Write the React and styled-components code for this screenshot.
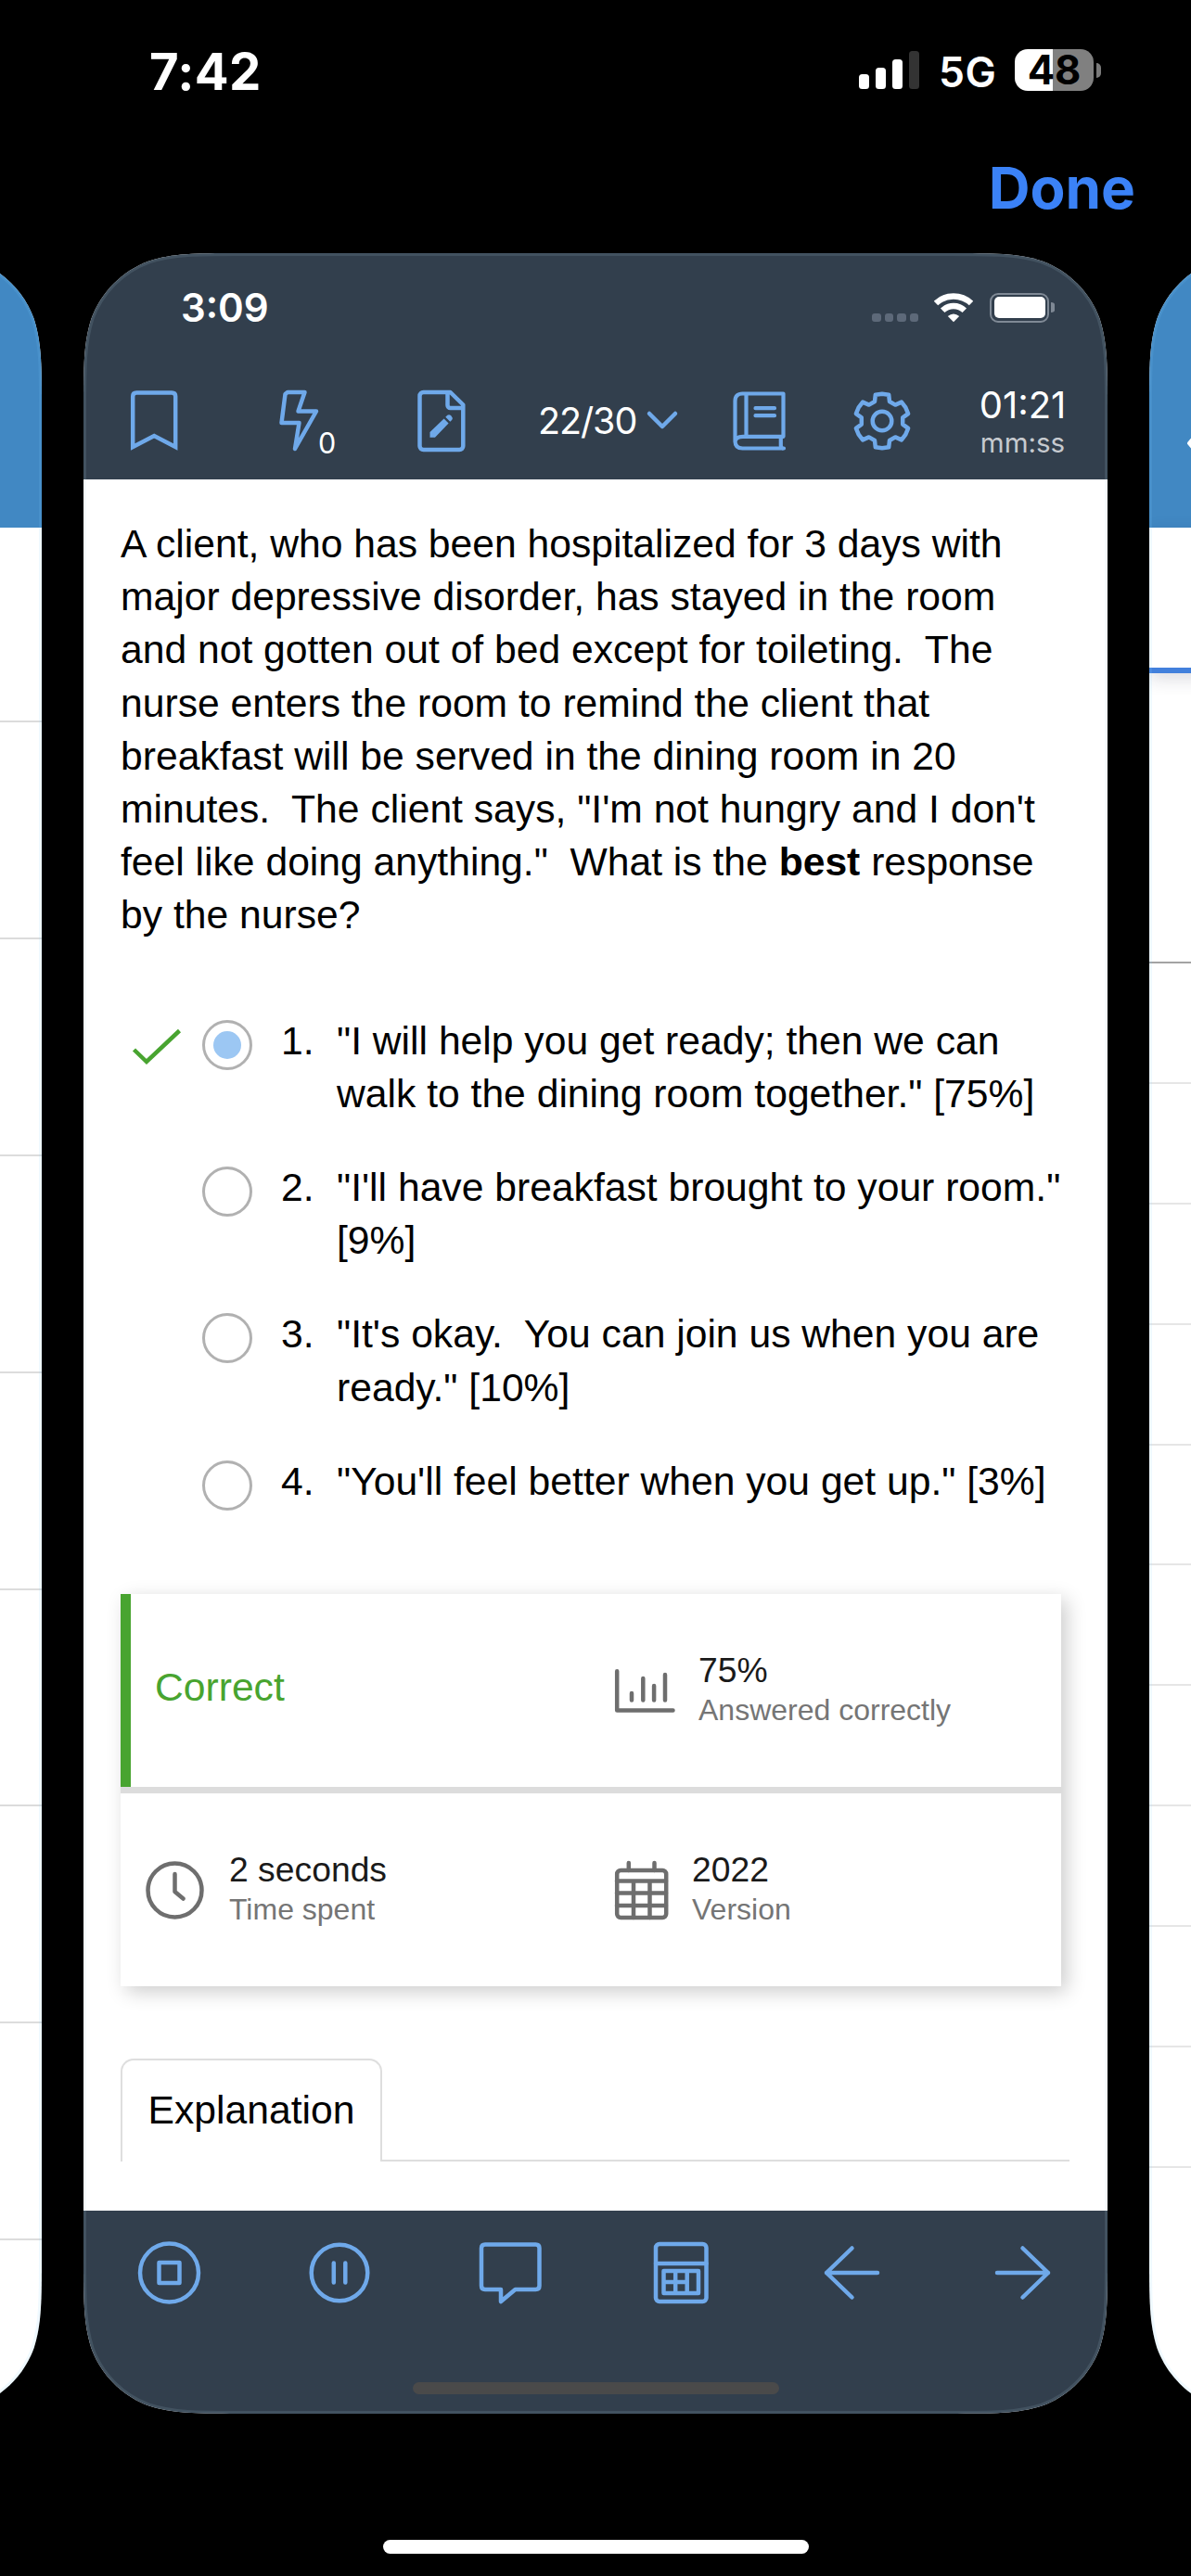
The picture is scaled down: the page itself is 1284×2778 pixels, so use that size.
import React from "react";
import styled, { createGlobalStyle } from "styled-components";

const INK = "#323f4d";
const ACCENT = "#6fa9ea";
const GREY = "#6e6e6e";
const GREEN = "#48a430";
const PANEL_W = 1104;
const PANEL_H = 2330;

/* Rounded rectangle whose corners ease into the sides. */
const smoothRect = (w, h, r) => {
  const n = (v) => Math.round(v * 100) / 100;
  const seg = [
    [1.52866, 0], [1.08849, 0], [0.86841, 0], [0.63149, 0.07491],
    [0.37282, 0.16906], [0.16906, 0.37282], [0.07491, 0.63149],
    [0, 0.86841], [0, 1.08849], [0, 1.52866],
  ].map(([x, y]) => [x * r, y * r]);
  const corner = (pts) => {
    const [a, ...rest] = pts.map(([x, y]) => `${n(x)} ${n(y)}`);
    return `${a} C${rest.slice(0, 3).join(" ")} C${rest.slice(3, 6).join(" ")} C${rest.slice(6, 9).join(" ")}`;
  };
  const tr = corner(seg.map(([x, y]) => [w - x, y]));
  const br = corner([...seg].reverse().map(([x, y]) => [w - x, h - y]));
  const bl = corner(seg.map(([x, y]) => [x, h - y]));
  const tl = corner([...seg].reverse().map(([x, y]) => [x, y]));
  return `M${tr} L${br} L${bl} L${tl} Z`;
};
const PANEL_SHAPE = smoothRect(PANEL_W, PANEL_H, 112);

const Global = createGlobalStyle`
  html, body { margin: 0; background: #000; }
  * { box-sizing: border-box; }
`;

const Screen = styled.main`
  width: 1284px;
  height: 2778px;
  overflow: hidden;
  display: flex;
  flex-direction: column;
  align-items: center;
  background: #000;
  font-family: Inter, "Liberation Sans", sans-serif;
`;

const StatusBar = styled.div`
  width: 100%;
  height: 151px;
  padding: 0 97px 0 161px;
  display: flex;
  align-items: center;
  justify-content: space-between;
`;
const Clock = styled.span`
  margin-top: 2px;
  color: #fff;
  font-size: 54.5px;
  line-height: 60px;
  font-weight: 750;
  letter-spacing: 0.4px;
`;
const StatusRight = styled.div`
  display: flex;
  align-items: center;
`;
const Signal = styled.div`
  display: flex;
  align-items: flex-end;
  gap: 7px;
  width: 65px;
  height: 41px;
`;
const SignalBar = styled.i`
  width: 11px;
  height: ${(p) => p.$h}px;
  border-radius: 3.5px;
  background: ${(p) => (p.$off ? "#333" : "#fff")};
`;
const Network = styled.span`
  margin: 5px 0 0 21px;
  width: 82px;
  color: #fff;
  font-size: 44.5px;
  line-height: 50px;
  font-weight: 600;
  letter-spacing: 0.4px;
`;
const Battery = styled.div`
  width: 85px;
  height: 45px;
  border-radius: 14px;
  display: flex;
  align-items: center;
  justify-content: center;
  background: linear-gradient(90deg, #fff 48%, #808080 48%);
  color: #000;
  font-size: 43.5px;
  line-height: 45px;
  font-weight: 750;
`;
const BatteryCap = styled.i`
  margin-left: ${(p) => p.$gap || 3}px;
  width: ${(p) => p.$w || 5}px;
  height: ${(p) => p.$h || 16}px;
  border-radius: 0 8px 8px 0 / 0 50% 50% 0;
  background: ${(p) => p.$color || "#7a7a7a"};
`;

const NavRow = styled.nav`
  width: 100%;
  height: 104px;
  margin-bottom: 18px;
  padding-right: 60px;
  display: flex;
  align-items: center;
  justify-content: flex-end;
`;
const DoneButton = styled.button`
  border: 0;
  padding: 0;
  background: none;
  color: #3b82f7;
  font: 700 62px/70px Inter, sans-serif;
`;

const Carousel = styled.div`
  display: flex;
  gap: 45px;
  flex: none;
`;
const Panel = styled.section`
  position: relative;
  flex: none;
  width: ${PANEL_W}px;
  height: ${PANEL_H}px;
  display: flex;
  flex-direction: column;
  background: #fff;
  clip-path: path("${PANEL_SHAPE}");
`;
const Rim = styled.svg`
  position: absolute;
  inset: 0;
  pointer-events: none;
`;

const PeekHeader = styled.div`
  height: 296px;
  flex: none;
  padding: 199px 0 0 39px;
  background: #4188c3;
`;
const PeekRow = styled.div`
  flex: none;
  height: ${(p) => p.$h}px;
  border-bottom: 2px solid ${(p) => p.$line || "#dcdcdc"};
`;
const PeekTab = styled.div`
  flex: none;
  height: 157px;
  border-bottom: 6px solid #4280dc;
  box-shadow: 0 6px 18px rgba(30, 30, 70, 0.16);
`;

const Header = styled.header`
  height: 244px;
  flex: none;
  background: ${INK};
`;
const InnerStatus = styled.div`
  height: 117px;
  padding: 0 57px 0 105px;
  display: flex;
  align-items: center;
`;
const InnerClock = styled.span`
  flex: 1;
  color: #fff;
  font-size: 42px;
  line-height: 48px;
  font-weight: 600;
`;
const Dots = styled.div`
  display: flex;
  gap: 4px;
  align-self: flex-end;
  margin: 0 17px 43px 0;
`;
const Dot = styled.i`
  width: 9.4px;
  height: 9px;
  border-radius: 3px;
  background: #5d6979;
`;
const InnerBattery = styled.div`
  margin-left: 18px;
  width: 64px;
  height: 32px;
  padding: 2.5px;
  border: 2.5px solid #7f8995;
  border-radius: 9px;
`;
const InnerCharge = styled.div`
  height: 100%;
  border-radius: 5px;
  background: #fff;
`;

const Toolbar = styled.div`
  height: 127px;
  padding-left: 51px;
  display: grid;
  grid-template-columns: 159px 150px 130px 210px 129px 136px 95px;
  align-items: center;
`;
const Icon = styled.svg`
  display: block;
  flex: none;
  overflow: visible;
  fill: none;
  stroke: ${(p) => p.$color || ACCENT};
  stroke-width: ${(p) => p.$weight || 4.5};
  stroke-linecap: ${(p) => p.$cap || "round"};
  stroke-linejoin: ${(p) => p.$join || "round"};
`;
const BoltGroup = styled.div`
  display: flex;
  align-items: flex-end;
`;
const BoltCount = styled.span`
  margin: 0 0 -6.5px -3px;
  color: #fff;
  font-size: 30.5px;
  line-height: 34px;
`;
const Counter = styled.div`
  display: flex;
  align-items: center;
  gap: 12px;
  color: #fff;
  font-size: 39.5px;
  line-height: 48px;
  letter-spacing: -1.1px;
`;
const Timer = styled.div`
  display: flex;
  flex-direction: column;
  align-items: center;
  padding-top: 4px;
  color: #fff;
  font-size: 40px;
  line-height: 42px;
`;
const TimerUnit = styled.span`
  color: #c6cacf;
  font-size: 29.5px;
  line-height: 38px;
`;

const Body = styled.div`
  flex: 1;
  padding: 41px 40px 0;
  font-family: "Liberation Sans", Arial, sans-serif;
  font-size: 42.65px;
  line-height: 57.2px;
  color: #000;
`;
const Question = styled.div`
  display: flex;
  flex-direction: column;
`;
const Line = styled.div`
  white-space: pre;
`;
const Answers = styled.ol`
  list-style: none;
  margin: 78px 0 0;
  padding: 0;
  display: flex;
  flex-direction: column;
  gap: 44px;
`;
const Answer = styled.li`
  display: grid;
  grid-template-columns: 88px 85px 60px 1fr;
`;
const MarkSlot = styled.div`
  padding: 15px 0 0 12px;
`;
const Radio = styled.span`
  width: 54px;
  height: 54px;
  margin: 6px 0 -6px;
  border: 3px solid #b1b1b1;
  border-radius: 50%;
  display: grid;
  place-items: center;
`;
const RadioDot = styled.i`
  width: 30px;
  height: 30px;
  border-radius: 50%;
  background: #9cc7f3;
`;

const Result = styled.div`
  width: 1014px;
  height: 423px;
  margin-top: 93px;
  background: #fff;
  display: flex;
  flex-direction: column;
  box-shadow: 6px 6px 20px rgba(0, 0, 0, 0.2);
`;
const ResultRow = styled.div`
  height: 208px;
  display: grid;
  grid-template-columns: ${(p) => (p.$accent ? "522px" : "533px")} 1fr;
  align-items: center;
  border-left: ${(p) => (p.$accent ? `11px solid ${GREEN}` : "0")};
`;
const Divider = styled.div`
  height: 7px;
  background: #dcdcdc;
`;
const Verdict = styled.div`
  padding: 0 0 6px 26px;
  color: ${GREEN};
`;
const Stat = styled.div`
  display: flex;
  align-items: center;
  gap: ${(p) => p.$gap}px;
  padding-left: ${(p) => p.$indent || 0}px;
`;
const StatText = styled.div`
  display: flex;
  flex-direction: column;
  padding-bottom: 2px;
  white-space: nowrap;
`;
const StatValue = styled.span`
  color: #1a1a1a;
  font-size: 37.3px;
  line-height: 44px;
`;
const StatLabel = styled.span`
  color: #757575;
  font-size: 32px;
  line-height: 42px;
`;

const Tabs = styled.div`
  width: 1023px;
  margin-top: 77.5px;
  display: flex;
`;
const Tab = styled.div`
  width: 282px;
  height: 111px;
  border: 2px solid #dedede;
  border-bottom: 0;
  border-radius: 14px 14px 0 0;
  line-height: 107px;
  text-align: center;
`;
const TabRest = styled.div`
  flex: 1;
  border-bottom: 2px solid #dedede;
`;

const Footer = styled.footer`
  height: 219px;
  flex: none;
  background: ${INK};
  display: flex;
  flex-direction: column;
  align-items: center;
`;
const FooterRow = styled.div`
  height: 134px;
  display: grid;
  grid-template-columns: repeat(6, 184px);
  align-items: center;
  justify-items: center;
`;
const HomeBar = styled.div`
  flex: none;
  width: ${(p) => p.$w}px;
  height: ${(p) => p.$h}px;
  margin-top: ${(p) => p.$top}px;
  border-radius: 8px;
  background: ${(p) => p.$color};
`;

const gearPoints = [0, 60, 120, 180, 240, 300]
  .flatMap((deg) => {
    const a = (deg * Math.PI) / 180;
    return [[-8, -21], [-7.2, -28.3], [0, -29.2], [7.2, -28.3], [8, -21]].map(([x, y]) => [
      (32 + x * Math.cos(a) - y * Math.sin(a)).toFixed(1),
      (32 + x * Math.sin(a) + y * Math.cos(a)).toFixed(1),
    ].join(","));
  })
  .join(" ");

const PanelRim = ({ color }) => (
  <Rim width={PANEL_W} height={PANEL_H} viewBox={`0 0 ${PANEL_W} ${PANEL_H}`}>
    <path d={PANEL_SHAPE} fill="none" stroke={color} strokeOpacity="0.12" strokeWidth="6" />
  </Rim>
);

const answers = [
  { lines: ["\"I will help you get ready; then we can", "walk to the dining room together.\" [75%]"], chosen: true },
  { lines: ["\"I'll have breakfast brought to your room.\"", "[9%]"] },
  { lines: ["\"It's okay.  You can join us when you are", "ready.\" [10%]"] },
  { lines: ["\"You'll feel better when you get up.\" [3%]"] },
];

const PreviousPage = () => (
  <Panel>
    <PeekHeader />
    <PeekRow $h={210} />
    {Array.from({ length: 7 }, (_, i) => (
      <PeekRow key={i} $h={233.9} />
    ))}
    <PanelRim color="#7fd0ff" />
  </Panel>
);

const NextPage = () => (
  <Panel>
    <PeekHeader>
      <Icon width="14" height="24" viewBox="0 0 14 24" $color="#fff" $weight="4">
        <path d="M13 -5L4 6L13 17" />
      </Icon>
    </PeekHeader>
    <PeekTab />
    <PeekRow $h={313} $line="#a3a3a3" />
    {Array.from({ length: 10 }, (_, i) => (
      <PeekRow key={i} $h={129.9} $line="#e6e6e6" />
    ))}
    <PanelRim color="#7fd0ff" />
  </Panel>
);

const QuestionPage = () => (
  <Panel>
    <Header>
      <InnerStatus>
        <InnerClock>3:09</InnerClock>
        <Dots><Dot /><Dot /><Dot /><Dot /></Dots>
        <svg width="42" height="32" viewBox="0 0 42 32" fill="none" stroke="#fff" strokeWidth="6.4">
          <path d="M2 11a27.7 27.7 0 0 1 38 0" />
          <path d="M9.2 18.8a17 17 0 0 1 23.6 0" />
          <path d="M21 31.3L14.8 25Q21 20 27.2 25z" fill="#fff" stroke="none" />
        </svg>
        <InnerBattery><InnerCharge /></InnerBattery>
        <BatteryCap $w={4} $h={11} $gap={2} $color="#7f8995" />
      </InnerStatus>
      <Toolbar>
        <Icon width="51" height="66" viewBox="0 0 51 66" $join="miter">
          <path d="M2.2 61V6.5q0-4 4-4h38q4 0 4 4v54.500L25.2 49z" />
        </Icon>
        <BoltGroup>
          <Icon width="46" height="70" viewBox="0 0 46 70">
            <path d="M10 4H28.500L21.500 24.500H41L18 65L22.500 37H3.500L7.500 6Z" />
          </Icon>
          <BoltCount>0</BoltCount>
        </BoltGroup>
        <Icon width="52" height="68" viewBox="0 0 52 68">
          <path d="M6.500 3H35.500L49.300 16.500V61a4 4 0 0 1-4 4H6.500a4 4 0 0 1-4-4V7a4 4 0 0 1 4-4zM32.500 3.500V17a3 3 0 0 0 3 3H49" />
          <path d="M13.500 51.700V46L28.600 31.500l5 5L19 51.700zM30.300 29.700l2-2q2.200-1.200 4.200.800t.800 4.200l-2 2z" fill={ACCENT} stroke="none" />
        </Icon>
        <Counter>
          22/30
          <Icon width="32" height="18" viewBox="0 0 32 18"><path d="M2 1L16 15L30 1" /></Icon>
        </Counter>
        <Icon width="58" height="64" viewBox="0 0 58 64" $weight="4.2">
          <path d="M54.500 48.800V2.500H10.500q-8 0-8 8v43q0 8 8 8H55M54.500 48.800H11q-8.500 0-8.500 6M51.800 49v9.500q0 2 2 3M14.500 2.500v46M24.500 18.200h20.500M24.500 26.200h20.500" />
        </Icon>
        <Icon width="64" height="64" viewBox="0 0 64 64">
          <polygon points={gearPoints} />
          <circle cx="32" cy="32" r="10.300" />
        </Icon>
        <Timer>
          <span>01:21</span>
          <TimerUnit>mm:ss</TimerUnit>
        </Timer>
      </Toolbar>
    </Header>

    <Body>
      <Question>
        <Line>A client, who has been hospitalized for 3 days with</Line>
        <Line>major depressive disorder, has stayed in the room</Line>
        <Line>{"and not gotten out of bed except for toileting.  The"}</Line>
        <Line>nurse enters the room to remind the client that</Line>
        <Line>breakfast will be served in the dining room in 20</Line>
        <Line>{"minutes.  The client says, \"I'm not hungry and I don't"}</Line>
        <Line>{"feel like doing anything.\"  What is the "}<b>best</b>{" response"}</Line>
        <Line>by the nurse?</Line>
      </Question>

      <Answers>
        {answers.map((a, i) => (
          <Answer key={i}>
            <MarkSlot>
              {a.chosen && (
                <Icon width="54" height="40" viewBox="0 0 54 40" $color={GREEN} $cap="butt" $join="miter">
                  <path d="M2.500 23L16 36L51.500 2.500" />
                </Icon>
              )}
            </MarkSlot>
            <Radio>{a.chosen && <RadioDot />}</Radio>
            <span>{`${i + 1}.`}</span>
            <div>
              {a.lines.map((line) => <Line key={line}>{line}</Line>)}
            </div>
          </Answer>
        ))}
      </Answers>

      <Result>
        <ResultRow $accent>
          <Verdict>Correct</Verdict>
          <Stat $gap={25}>
            <Icon width="65" height="47" viewBox="0 0 65 47" $color={GREY}>
              <path d="M2.200 2.200V44.500H62.500M18 26V33.500M30.300 10V33.500M42.100 18V33.500M54 6V33.500" />
            </Icon>
            <StatText>
              <StatValue>75%</StatValue>
              <StatLabel>Answered correctly</StatLabel>
            </StatText>
          </Stat>
        </ResultRow>
        <Divider />
        <ResultRow>
          <Stat $gap={27} $indent={27}>
            <Icon width="63" height="63" viewBox="0 0 63 63" $color={GREY}>
              <circle cx="31.500" cy="31.500" r="29" />
              <path d="M31.500 14V33L40.500 40.500" />
            </Icon>
            <StatText>
              <StatValue>2 seconds</StatValue>
              <StatLabel>Time spent</StatLabel>
            </StatText>
          </Stat>
          <Stat $gap={27}>
            <Icon width="56" height="63" viewBox="0 0 56 63" $color={GREY}>
              <rect x="2.200" y="10" width="53" height="51" rx="4" />
              <path d="M2 21.500H55M2 34.500H55M2 48H55M20 21.500V61M37.500 21.500V61M14.800 2V10M42.500 2V10" />
            </Icon>
            <StatText>
              <StatValue>2022</StatValue>
              <StatLabel>Version</StatLabel>
            </StatText>
          </Stat>
        </ResultRow>
      </Result>

      <Tabs>
        <Tab>Explanation</Tab>
        <TabRest />
      </Tabs>
    </Body>

    <Footer>
      <FooterRow>
        <Icon width="68" height="68" viewBox="0 0 68 68">
          <circle cx="34.500" cy="34" r="31.500" />
          <rect x="23.500" y="23" width="22" height="22" />
        </Icon>
        <Icon width="68" height="68" viewBox="0 0 68 68">
          <circle cx="34" cy="34" r="30.300" />
          <path d="M27.800 23.500V44.500M40.300 23.500V44.500" />
        </Icon>
        <Icon width="68" height="68" viewBox="0 0 68 68">
          <path d="M7 3.400H61.500q4 0 4 4V48q0 4-4 4H39.500L24 65V52H7q-4 0-4-4V7.400q0-4 4-4z" />
        </Icon>
        <Icon width="68" height="68" viewBox="0 0 68 68">
          <rect x="7" y="3" width="54.500" height="62" rx="4" />
          <path d="M7 24H61.500M15.500 32H53V56H15.500ZM28.200 32V56M40.700 32V56M15.500 44H40.700" />
        </Icon>
        <Icon width="68" height="68" viewBox="0 0 68 68">
          <path d="M62 34H7M34.500 7.500L7 34L34.500 60.500" />
        </Icon>
        <Icon width="68" height="68" viewBox="0 0 68 68">
          <path d="M7 34H62M34.500 7.500L62 34L34.500 60.500" />
        </Icon>
      </FooterRow>
      <HomeBar $w={395} $h={13} $top={51} $color="#4a4a4a" />
    </Footer>
    <PanelRim color="#bfe0ee" />
  </Panel>
);

export default function App() {
  return (
    <Screen>
      <Global />
      <StatusBar>
        <Clock>7:42</Clock>
        <StatusRight>
          <Signal>
            <SignalBar $h={16} />
            <SignalBar $h={23} />
            <SignalBar $h={32} />
            <SignalBar $h={41} $off />
          </Signal>
          <Network>5G</Network>
          <Battery>48</Battery>
          <BatteryCap />
        </StatusRight>
      </StatusBar>
      <NavRow>
        <DoneButton>Done</DoneButton>
      </NavRow>
      <Carousel>
        <PreviousPage />
        <QuestionPage />
        <NextPage />
      </Carousel>
      <HomeBar $w={459} $h={15} $top={136} $color="#fff" />
    </Screen>
  );
}
